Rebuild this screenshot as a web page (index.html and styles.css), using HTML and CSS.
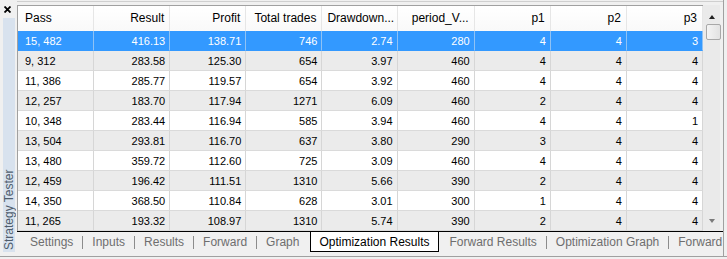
FILE: index.html
```html
<!DOCTYPE html>
<html>
<head>
<meta charset="utf-8">
<link rel="stylesheet" href="styles.css">
</head>
<body>
<div class="window">
  <div class="side">
    <div class="close">
      <svg width="7" height="7" viewBox="0 0 7 7"><path d="M0.5 0.5 L6.5 6.5 M6.5 0.5 L0.5 6.5" stroke="#000" stroke-width="1.8"/></svg>
    </div>
    <div class="caption">Strategy Tester</div>
  </div>
  <div class="main">
    <div class="topline"></div>
    <div class="grid">
      <div class="tablewrap">
        <table class="results">
          <colgroup>
            <col class="c76"><col class="c76"><col class="c76"><col class="c76"><col class="c75"><col class="c77"><col class="c76"><col class="c76"><col class="c76">
          </colgroup>
          <thead>
            <tr><th class="left">Pass</th><th>Result</th><th>Profit</th><th>Total trades</th><th>Drawdown...</th><th>period_V...</th><th>p1</th><th>p2</th><th>p3</th></tr>
          </thead>
          <tbody>
            <tr class="sel"><td class="left">15, 482</td><td>416.13</td><td>138.71</td><td>746</td><td>2.74</td><td>280</td><td>4</td><td>4</td><td>3</td></tr>
            <tr class="alt"><td class="left">9, 312</td><td>283.58</td><td>125.30</td><td>654</td><td>3.97</td><td>460</td><td>4</td><td>4</td><td>4</td></tr>
            <tr><td class="left">11, 386</td><td>285.77</td><td>119.57</td><td>654</td><td>3.92</td><td>460</td><td>4</td><td>4</td><td>4</td></tr>
            <tr class="alt"><td class="left">12, 257</td><td>183.70</td><td>117.94</td><td>1271</td><td>6.09</td><td>460</td><td>2</td><td>4</td><td>4</td></tr>
            <tr><td class="left">10, 348</td><td>283.44</td><td>116.94</td><td>585</td><td>3.94</td><td>460</td><td>4</td><td>4</td><td>1</td></tr>
            <tr class="alt"><td class="left">13, 504</td><td>293.81</td><td>116.70</td><td>637</td><td>3.80</td><td>290</td><td>3</td><td>4</td><td>4</td></tr>
            <tr><td class="left">13, 480</td><td>359.72</td><td>112.60</td><td>725</td><td>3.09</td><td>460</td><td>4</td><td>4</td><td>4</td></tr>
            <tr class="alt"><td class="left">12, 459</td><td>196.42</td><td>111.51</td><td>1310</td><td>5.66</td><td>390</td><td>2</td><td>4</td><td>4</td></tr>
            <tr><td class="left">14, 350</td><td>368.50</td><td>110.84</td><td>628</td><td>3.01</td><td>300</td><td>1</td><td>4</td><td>4</td></tr>
            <tr class="alt"><td class="left">11, 265</td><td>193.32</td><td>108.97</td><td>1310</td><td>5.74</td><td>390</td><td>2</td><td>4</td><td>4</td></tr>
          </tbody>
        </table>
      </div>
      <div class="vscroll">
        <div class="arrow up"></div>
        <div class="thumb"></div>
        <div class="track"></div>
        <div class="arrow down"></div>
      </div>
    </div>
    <div class="tabs">
      <div class="tab">Settings</div><div class="sep"></div>
      <div class="tab">Inputs</div><div class="sep"></div>
      <div class="tab">Results</div><div class="sep"></div>
      <div class="tab">Forward</div><div class="sep"></div>
      <div class="tab">Graph</div>
      <div class="tab active">Optimization Results</div>
      <div class="tab">Forward Results</div><div class="sep"></div>
      <div class="tab">Optimization Graph</div><div class="sep"></div>
      <div class="tab">Forward Graph</div>
    </div>
  </div>
</div>
</body>
</html>
```
FILE: styles.css
```css
* { box-sizing: border-box; }

html, body {
  margin: 0;
  padding: 0;
}

body {
  width: 727px;
  height: 259px;
  overflow: hidden;
  background: #f0f0f0;
  font-family: "Liberation Sans", Arial, sans-serif;
  color: #000;
}

.window {
  display: flex;
  height: 257px;
  border-bottom: 1px solid #a0a0a0;
}

.side {
  width: 17px;
  flex: none;
  display: flex;
  flex-direction: column;
}

.close {
  height: 18px;
  display: flex;
  padding: 6px 0 0 4px;
}

.close svg { display: block; }

.caption {
  flex: 1;
  margin: 0 2px 4px 3px;
  background: #d8e2ee;
  writing-mode: vertical-rl;
  transform: rotate(180deg);
  font-size: 12px;
  line-height: 12px;
  color: #4f5d6d;
  padding-top: 2px;
  white-space: nowrap;
}

.main {
  width: 707px;
  flex: none;
  display: flex;
  flex-direction: column;
  border-right: 1px solid #a0a0a0;
}

.topline {
  height: 4px;
  margin-top: 1px;
  border-top: 1px solid #cfcfcf;
}

.grid {
  display: flex;
  height: 226px;
}

.tablewrap {
  width: 686px;
  border-top: 1px solid #a0a0a0;
  border-left: 1px solid #a0a0a0;
  background: #fff;
  overflow: hidden;
}

.results {
  width: 685px;
  table-layout: fixed;
  border-collapse: separate;
  border-spacing: 0;
}

.c77 { width: 77px; }
.c76 { width: 76px; }
.c75 { width: 75px; }

.results th {
  height: 25px;
  padding: 0 5px 1px 5px;
  font-weight: normal;
  font-size: 12px;
  text-align: right;
  white-space: nowrap;
  overflow: hidden;
  background: linear-gradient(#ffffff, #f9f9f9);
  border-right: 1px solid #e6e6e6;
}

.results td {
  height: 20px;
  padding: 0 4px 0 6px;
  font-size: 11px;
  text-align: right;
  white-space: nowrap;
  border-right: 1px solid #d6d6d6;
  border-bottom: 1px solid #dadada;
  background: #fff;
}

.results th.left,
.results td.left {
  text-align: left;
  padding-left: 7px;
}

.results tr.alt td { background: #ebebeb; }

.results tr.sel td {
  background: #3399ff;
  color: #fff;
  border-right-color: #8fc2f5;
  border-bottom-color: #3399ff;
}

.vscroll {
  width: 17px;
  display: flex;
  flex-direction: column;
  align-items: center;
  background: #eaeaea;
}

.arrow {
  width: 0;
  height: 0;
  border-left: 3.5px solid transparent;
  border-right: 3.5px solid transparent;
}

.arrow.up {
  margin-top: 10px;
  border-bottom: 4px solid #222;
}

.arrow.down {
  margin-bottom: 8px;
  border-top: 4px solid #7a7a7a;
}

.thumb {
  margin-top: 5px;
  margin-left: 3px;
  width: 15px;
  height: 16px;
  border: 1px solid #a8a8a8;
  border-radius: 2px;
  background: linear-gradient(to right, #f4f4f4, #e2e2e2);
}

.track { flex: 1; }

.tabs {
  display: flex;
  height: 25px;
  border-top: 1px solid #000;
  padding-left: 4px;
  overflow: hidden;
  white-space: nowrap;
}

.tab {
  height: 20px;
  padding: 0 9px;
  display: flex;
  align-items: center;
  font-size: 12px;
  color: #6e6e6e;
  flex: none;
}

.tab.active {
  background: #fff;
  color: #000;
  border: 1px solid #000;
  border-top: none;
  padding: 0 8px;
  margin: 0 2px;
}

.sep {
  width: 1px;
  height: 13px;
  margin-top: 4px;
  background: #8c8c8c;
  flex: none;
}
```
